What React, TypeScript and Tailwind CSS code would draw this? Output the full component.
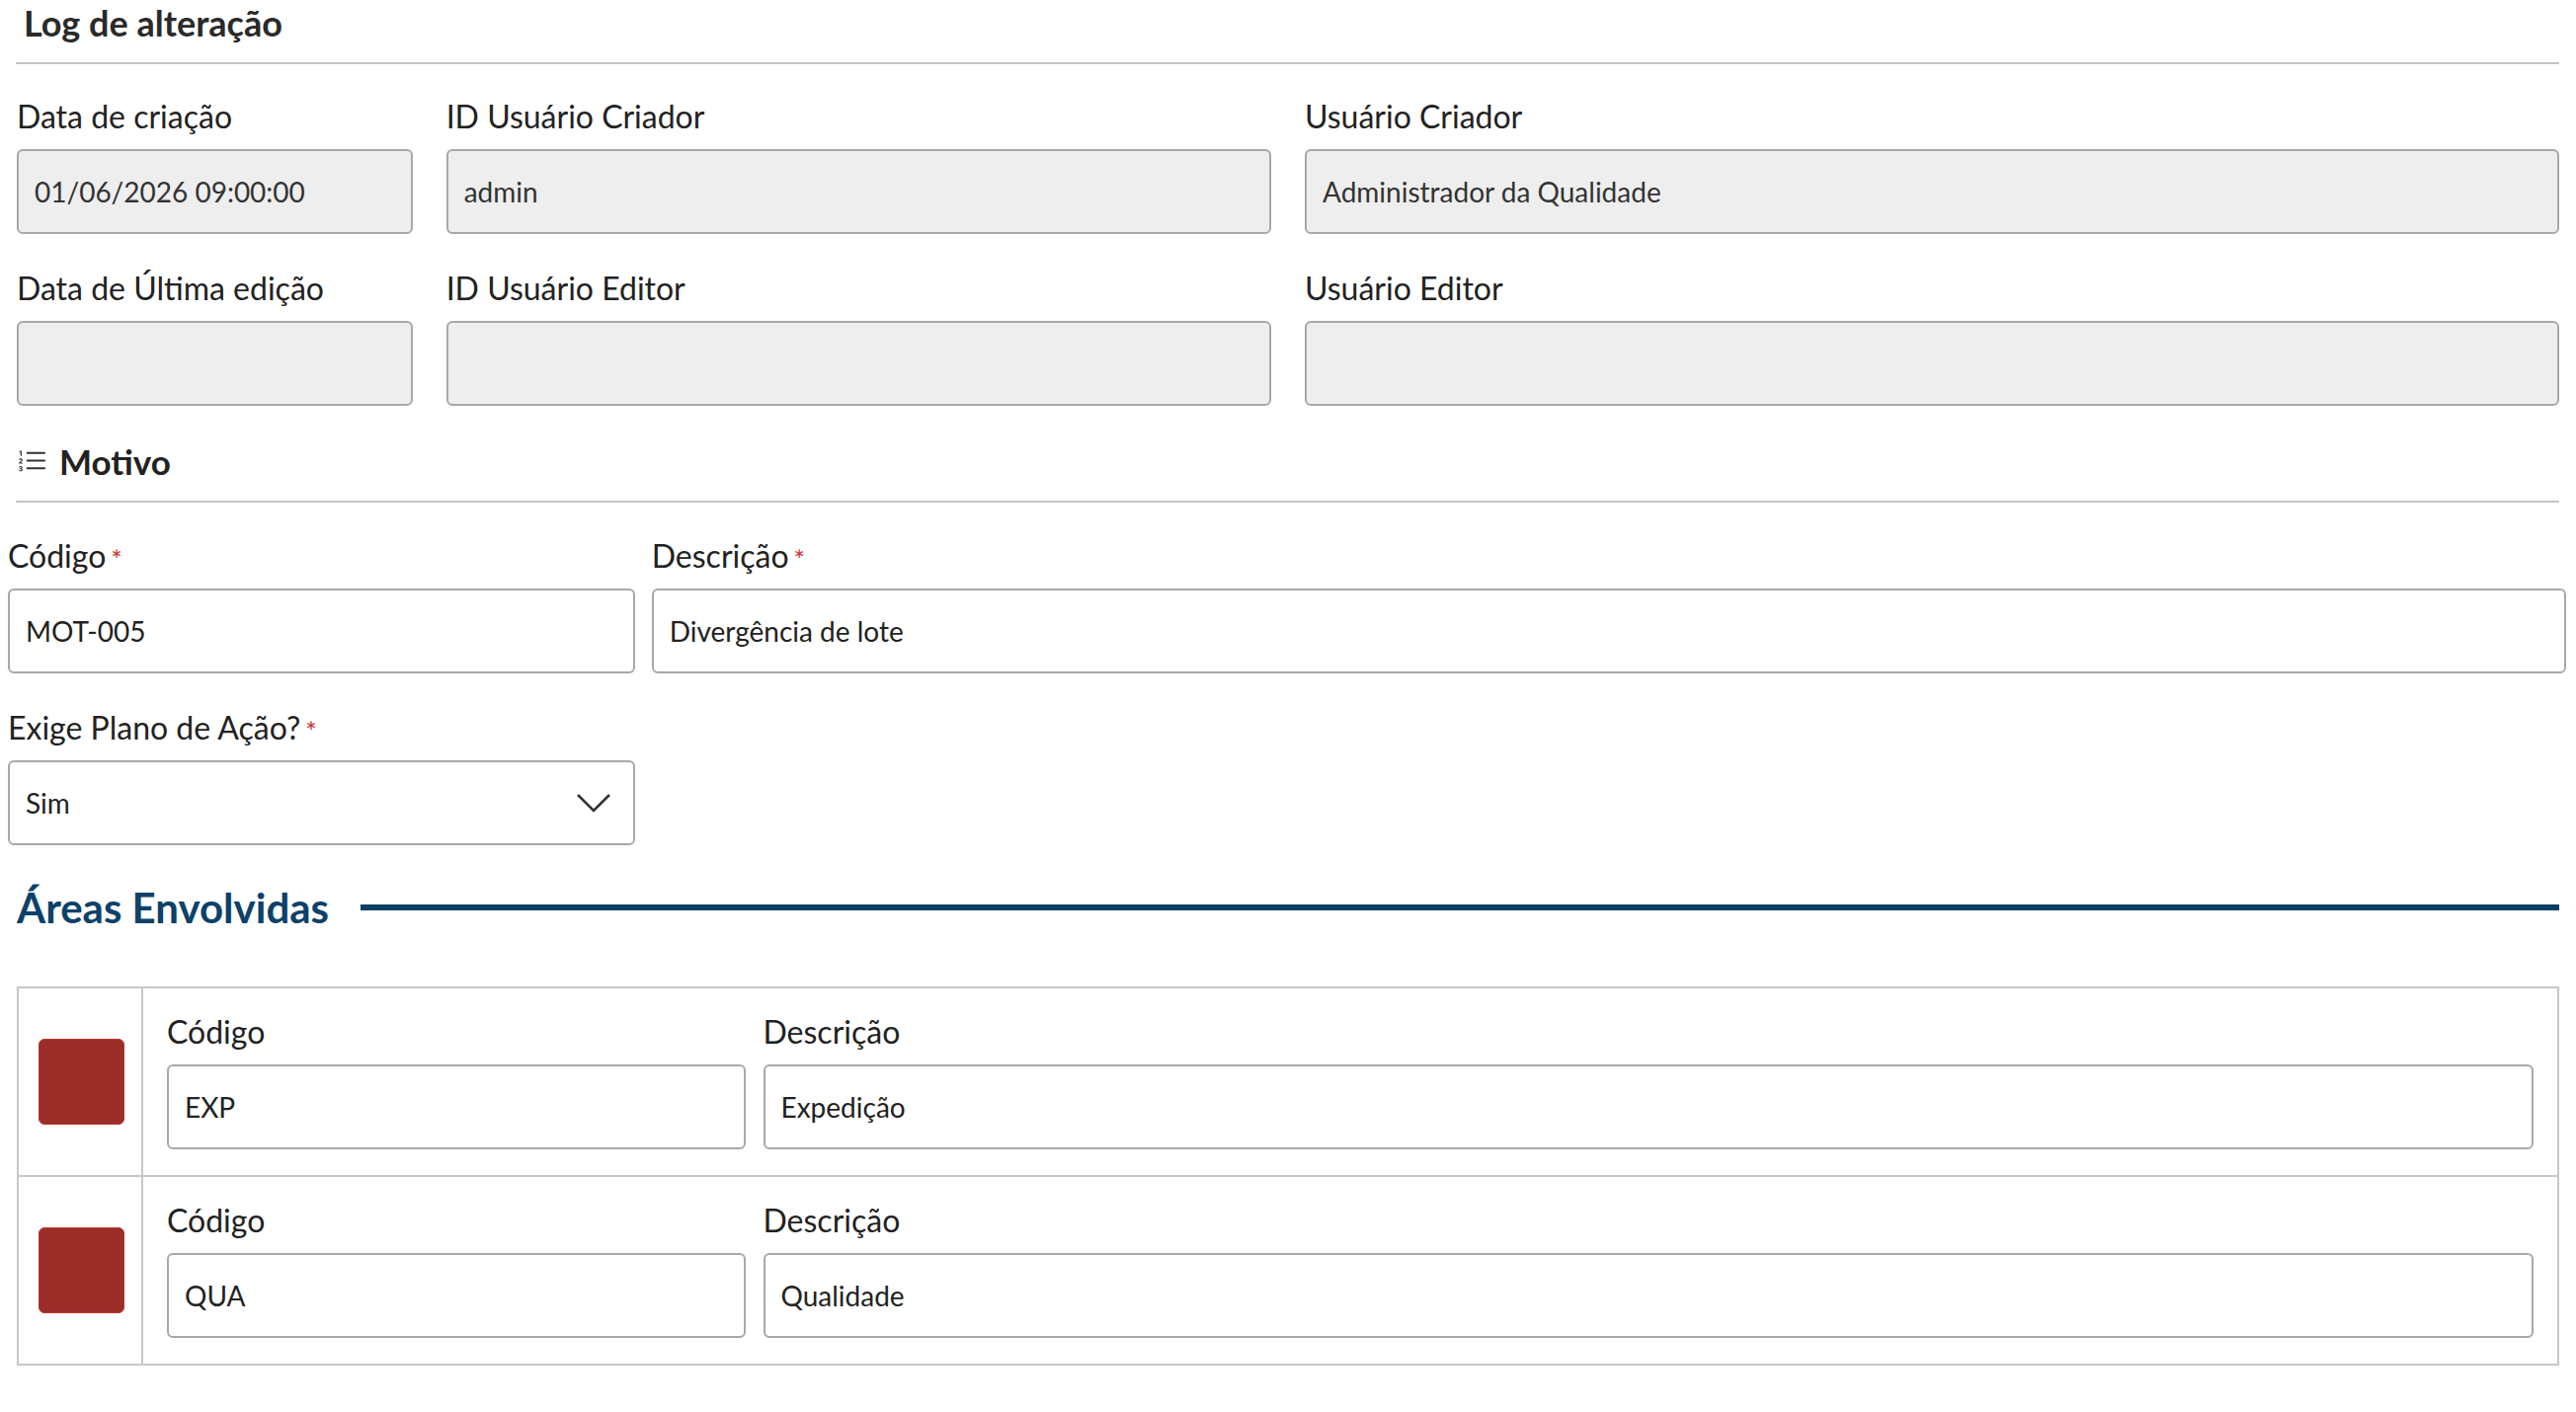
import React from "react";
import { BsListOl } from "react-icons/bs";

type FieldProps = {
  label: string;
  value?: string;
  required?: boolean;
  readOnly?: boolean;
  className?: string;
};

function FieldLabel({ label, required }: { label: string; required?: boolean }) {
  return (
    <div className="h-[36px] whitespace-nowrap text-[32px] leading-[36px] text-[#222]">
      {label}
      {required && (
        <span className="relative top-[2px] ml-[5px] text-[27px] text-[#c9302c]">*</span>
      )}
    </div>
  );
}

function Field({ label, value = "", required, readOnly, className }: FieldProps) {
  return (
    <div className={className}>
      <FieldLabel label={label} required={required} />
      <input
        readOnly
        value={value}
        className={
          readOnly
            ? "mt-[15px] block h-[86px] w-full rounded-[6px] border-2 border-[#a8a8a8] bg-[#eeeeee] px-[16px] text-[28px] text-[#333] outline-none"
            : "mt-[15px] block h-[86px] w-full rounded-[6px] border-2 border-[#a8a8a8] bg-white px-[16px] text-[28px] text-[#222] outline-none"
        }
      />
    </div>
  );
}

function SelectField({ label, value, required }: { label: string; value: string; required?: boolean }) {
  return (
    <div>
      <FieldLabel label={label} required={required} />
      <div className="mt-[15px] flex h-[86px] w-full items-center justify-between rounded-[6px] border-2 border-[#a8a8a8] bg-white pl-[16px] pr-[22px] text-[28px] text-[#222]">
        <span>{value}</span>
        <svg width="36" height="22" viewBox="0 0 36 22" fill="none">
          <polyline points="2,3 18,19 34,3" stroke="#333" strokeWidth="2.6" />
        </svg>
      </div>
    </div>
  );
}

function AreaRow({ code, description, last }: { code: string; description: string; last?: boolean }) {
  return (
    <div className={last ? "flex" : "flex border-b-2 border-[#c8c8c8]"}>
      <div className="flex w-[126px] shrink-0 items-center justify-center border-r-2 border-[#c8c8c8] pl-[2px]">
        <div className="h-[87px] w-[87px] rounded-[6px] border border-[#b8372f] bg-[#9c2d29]" />
      </div>
      <div className="grid flex-1 grid-cols-12 gap-x-[18px] px-[24px] pb-[26px] pt-[26px]">
        <Field className="col-span-3" label="Código" value={code} />
        <Field className="col-span-9" label="Descrição" value={description} />
      </div>
    </div>
  );
}

export default function App() {
  return (
    <div className="min-h-screen w-full bg-white font-[family-name:Lato,sans-serif] text-[#222]">
      {/* Log de alteração */}
      <section className="pl-[16px] pr-[17px]">
        <h2 className="mt-[4px] pl-[8px] text-[36px] font-bold leading-[38px] text-[#2a2a2a]">Log de alteração</h2>
        <div className="mt-[21px] h-[2px] bg-[#c4c4c4]" />
        <div className="mt-[35px] grid grid-cols-12 gap-x-[34px] gap-y-[37px] pl-[1px]">
          <Field className="col-span-2" label="Data de criação" value="01/06/2026 09:00:00" readOnly />
          <Field className="col-span-4" label="ID Usuário Criador" value="admin" readOnly />
          <Field className="col-span-6" label="Usuário Criador" value="Administrador da Qualidade" readOnly />
          <Field className="col-span-2" label="Data de Última edição" readOnly />
          <Field className="col-span-4" label="ID Usuário Editor" readOnly />
          <Field className="col-span-6" label="Usuário Editor" readOnly />
        </div>
      </section>

      {/* Motivo */}
      <section className="mt-[37px]">
        <div className="ml-[16px] mr-[17px]">
          <h2 className="flex h-[38px] items-center text-[35px] font-bold leading-[38px] text-[#222]">
            <BsListOl className="ml-[1px] mr-[12px] h-[31px] w-[31px] text-[#333]" />
            Motivo
          </h2>
          <div className="mt-[21px] h-[2px] bg-[#c4c4c4]" />
        </div>
        <div className="mt-[36px] pl-[8px] pr-[10px]">
          <div className="grid grid-cols-12 gap-x-[17px] gap-y-[37px]">
            <Field className="col-span-3" label="Código" value="MOT-005" required />
            <Field className="col-span-9" label="Descrição" value="Divergência de lote" required />
            <div className="col-span-3">
              <SelectField label="Exige Plano de Ação?" value="Sim" required />
            </div>
          </div>
        </div>
      </section>

      {/* Áreas Envolvidas */}
      <section className="mt-[39px] pl-[17px] pr-[17px] pb-[48px]">
        <div className="flex items-center">
          <h2 className="whitespace-nowrap text-[42px] font-bold leading-[48px] text-[#0d4169]">Áreas Envolvidas</h2>
          <div className="ml-[32px] h-[6px] flex-1 bg-[#0b3f66]" />
        </div>
        <div className="mt-[56px] border-2 border-[#c8c8c8]">
          <AreaRow code="EXP" description="Expedição" />
          <AreaRow code="QUA" description="Qualidade" last />
        </div>
      </section>
    </div>
  );
}
